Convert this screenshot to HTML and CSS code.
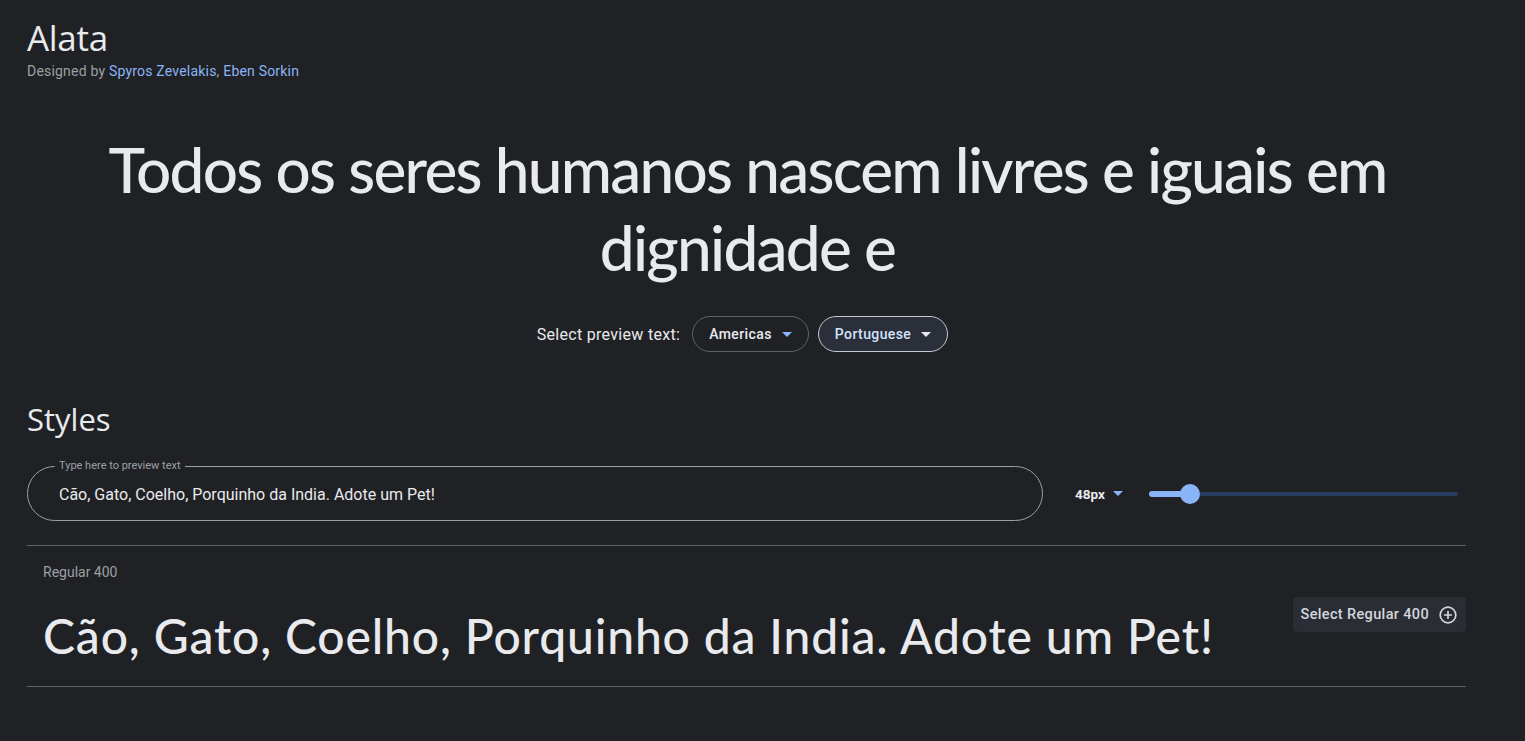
FILE: index.html
```html
<!DOCTYPE html>
<html lang="en">
<head>
<meta charset="utf-8">
<title>Alata</title>
<link rel="stylesheet" href="styles.css">
</head>
<body>
<div class="page">
  <header class="family-header">
    <h1 class="family-name">Alata</h1>
    <p class="designers">Designed by <a href="#">Spyros Zevelakis</a>, <a href="#">Eben Sorkin</a></p>
  </header>

  <section class="hero">
    <p class="hero-text">Todos os seres humanos nascem livres e iguais em dignidade e</p>
    <div class="preview-select">
      <span class="preview-label">Select preview text:</span>
      <button class="chip">Americas <span class="caret caret-blue"></span></button>
      <button class="chip chip-selected">Portuguese <span class="caret caret-white"></span></button>
    </div>
  </section>

  <section class="styles">
    <h2 class="styles-title">Styles</h2>
    <div class="controls">
      <div class="text-field">
        <span class="field-label">Type here to preview text</span>
        <span class="field-value">Cão, Gato, Coelho, Porquinho da India. Adote um Pet!</span>
      </div>
      <button class="size-select">48px <span class="caret caret-blue"></span></button>
      <div class="slider">
        <div class="slider-track"></div>
        <div class="slider-fill"></div>
        <div class="slider-thumb"></div>
      </div>
    </div>

    <div class="style-row">
      <div class="style-main">
        <div class="style-name">Regular 400</div>
        <div class="style-sample">Cão, Gato, Coelho, Porquinho da India. Adote um Pet!</div>
      </div>
      <button class="select-btn">Select Regular 400
        <svg class="plus-icon" viewBox="0 0 20 20" width="20" height="20" aria-hidden="true">
          <circle cx="10" cy="10" r="7.8" fill="none" stroke="currentColor" stroke-width="1.7"/>
          <path d="M10 6v8M6 10h8" stroke="currentColor" stroke-width="1.7" fill="none"/>
        </svg>
      </button>
    </div>
  </section>
</div>
</body>
</html>
```

FILE: styles.css
```css
* { box-sizing: border-box; }

html, body {
  margin: 0;
  padding: 0;
  background: #202124;
  color: #e8eaed;
  font-family: "Roboto", "Liberation Sans", sans-serif;
}

.page {
  width: 1439px;
  margin-left: 27px;
}

.family-header {
  padding-top: 16px;
}

.family-name {
  margin: 0;
  font-family: "Open Sans", "Roboto", sans-serif;
  font-weight: 400;
  font-size: 35px;
  line-height: 44px;
  letter-spacing: -0.3px;
  color: #e8eaed;
}

.designers {
  margin: 1px 0 0;
  font-size: 14px;
  line-height: 20px;
  letter-spacing: 0.2px;
  color: #9aa0a6;
}

.designers a {
  color: #8ab4f8;
  text-decoration: none;
}

.hero {
  padding-top: 49px;
  text-align: center;
}

.hero-text {
  margin: 0;
  padding-left: 2px;
  font-family: "Lato", sans-serif;
  font-weight: 500;
  font-size: 62px;
  line-height: 78px;
  letter-spacing: -1.7px;
  color: #e8eaed;
}

.preview-select {
  margin-top: 30px;
  display: flex;
  justify-content: center;
  align-items: center;
  gap: 9px;
  padding-right: 8px;
}

.preview-label {
  font-size: 16px;
  letter-spacing: 0.3px;
  color: #e8eaed;
  margin-right: 3px;
}

.chip {
  height: 36px;
  display: inline-flex;
  align-items: center;
  gap: 10px;
  padding: 0 16px;
  border-radius: 18px;
  border: 1px solid #5f6368;
  background: transparent;
  color: #e8eaed;
  font-family: "Roboto", sans-serif;
  font-weight: 500;
  font-size: 14px;
  letter-spacing: 0.4px;
}

.chip-selected {
  background: #2a2f3a;
  border-color: #c4c7cf;
  color: #d3e3fd;
}

.caret {
  width: 0;
  height: 0;
  border-left: 5px solid transparent;
  border-right: 5px solid transparent;
  border-top: 5px solid #8ab4f8;
}

.caret-white { border-top-color: #e8eaed; }

.styles {
  margin-top: 47px;
}

.styles-title {
  margin: 0;
  font-family: "Open Sans", "Roboto", sans-serif;
  font-weight: 400;
  font-size: 31px;
  line-height: 40px;
  letter-spacing: 0px;
}

.controls {
  margin-top: 27px;
  display: flex;
  align-items: center;
}

.text-field {
  position: relative;
  flex: 0 0 1016px;
  height: 55px;
  border: 1px solid #9aa0a6;
  border-radius: 28px;
  display: flex;
  align-items: center;
  padding-left: 31px;
}

.field-label {
  position: absolute;
  left: 27px;
  top: -8px;
  padding: 0 4px;
  background: #202124;
  font-size: 11px;
  line-height: 14px;
  color: #9aa0a6;
}

.field-value {
  font-size: 16px;
  color: #e8eaed;
  padding-top: 1px;
}

.size-select {
  margin-left: 32px;
  display: inline-flex;
  align-items: center;
  gap: 8px;
  background: transparent;
  border: none;
  padding: 0;
  color: #e8eaed;
  font-family: "Roboto", sans-serif;
  font-weight: 700;
  font-size: 13.5px;
}

.slider {
  position: relative;
  margin-left: 26px;
  width: 309px;
  height: 20px;
}

.slider-track {
  position: absolute;
  left: 0;
  right: 0;
  top: 8px;
  height: 4px;
  border-radius: 2px;
  background: #253d5e;
}

.slider-fill {
  position: absolute;
  left: 0;
  width: 42px;
  top: 7px;
  height: 6px;
  border-radius: 3px;
  background: #8ab4f8;
}

.slider-thumb {
  position: absolute;
  left: 31px;
  top: 0;
  width: 20px;
  height: 20px;
  border-radius: 50%;
  background: #8ab4f8;
}

.style-row {
  margin-top: 24px;
  border-top: 1px solid #5f6368;
  border-bottom: 1px solid #5f6368;
  display: flex;
  justify-content: space-between;
  align-items: flex-start;
  padding: 16px 0 16px 16px;
}

.style-name {
  font-size: 14px;
  line-height: 20px;
  color: #9aa0a6;
}

.style-sample {
  margin-top: 20px;
  font-family: "Lato", sans-serif;
  font-weight: 500;
  font-size: 48px;
  line-height: 68px;
  letter-spacing: 0.85px;
  color: #e8eaed;
  white-space: nowrap;
}

.select-btn {
  margin-top: 35px;
  height: 35px;
  display: inline-flex;
  align-items: center;
  gap: 9px;
  padding: 0 8px;
  border: none;
  border-radius: 4px;
  background: #2a2d33;
  color: #d3d7de;
  font-family: "Roboto", sans-serif;
  font-weight: 500;
  font-size: 14.5px;
  letter-spacing: 0.35px;
}

.plus-icon { display: block; }
```
